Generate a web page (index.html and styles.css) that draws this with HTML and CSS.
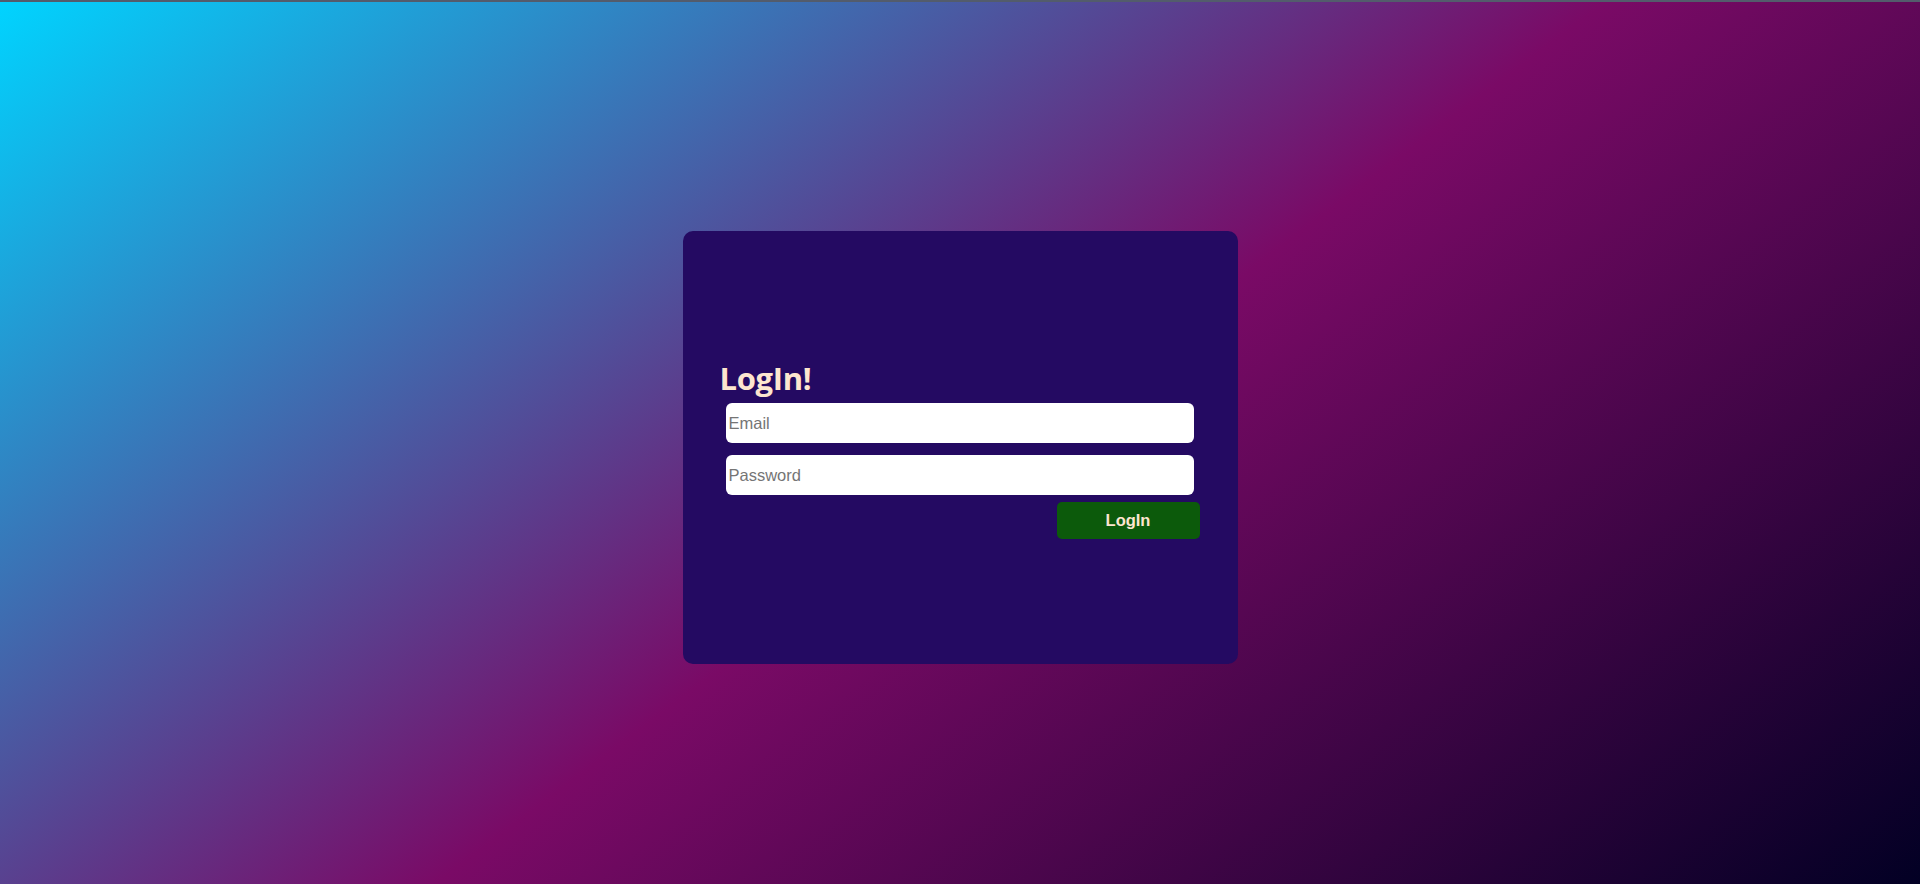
FILE: index.html
```html
<!DOCTYPE html>
<html lang="en">
<head>
<meta charset="utf-8">
<title>LogIn</title>
<link rel="stylesheet" href="styles.css">
</head>
<body>
<div class="topline"></div>
<main class="page">
  <section class="card">
    <form class="login-form">
      <h1 class="title">LogIn!</h1>
      <input class="field" type="email" placeholder="Email">
      <input class="field" type="password" placeholder="Password">
      <div class="actions">
        <button class="btn" type="button">LogIn</button>
      </div>
    </form>
  </section>
</main>
</body>
</html>
```
FILE: styles.css
```css
html, body {
  margin: 0;
  padding: 0;
  height: 100%;
}
body {
  font-family: "Liberation Sans", Arial, sans-serif;
  background: linear-gradient(143deg, #00d4ff 0%, #7a0a66 52%, #020024 100%);
  overflow: hidden;
}
.topline {
  height: 2px;
  background: #535c6c;
}
.page {
  box-sizing: border-box;
  height: 882px;
  padding-top: 9px;
  display: flex;
  align-items: center;
  justify-content: center;
}
.card {
  box-sizing: border-box;
  width: 555px;
  height: 433px;
  background: #240a62;
  border-radius: 10px;
  padding: 129px 38px 0 36px;
}
.login-form {
  display: flex;
  flex-direction: column;
}
.title {
  margin: 0 0 7px 1px;
  font-family: "Open Sans", "Noto Sans", sans-serif;
  font-weight: 700;
  font-size: 31px;
  line-height: 36px;
  color: #fde6cf;
  letter-spacing: -0.3px;
}
.field {
  box-sizing: border-box;
  width: 468px;
  height: 40px;
  margin: 0 0 12px 7px;
  border: none;
  border-radius: 6px;
  padding: 0 3px;
  background: #ffffff;
  font-family: "Liberation Sans", Arial, sans-serif;
  font-size: 16.5px;
  color: #222;
  outline: none;
}
.field::placeholder {
  color: #757575;
}
.field + .field {
  margin-bottom: 7px;
}
.actions {
  display: flex;
  justify-content: flex-end;
}
.btn {
  width: 143px;
  height: 37px;
  border: none;
  border-radius: 5px;
  background: #0c5a0b;
  color: #fde6cf;
  font-family: "Liberation Sans", Arial, sans-serif;
  font-weight: 700;
  font-size: 16.5px;
  padding: 0;
  cursor: pointer;
}
```
